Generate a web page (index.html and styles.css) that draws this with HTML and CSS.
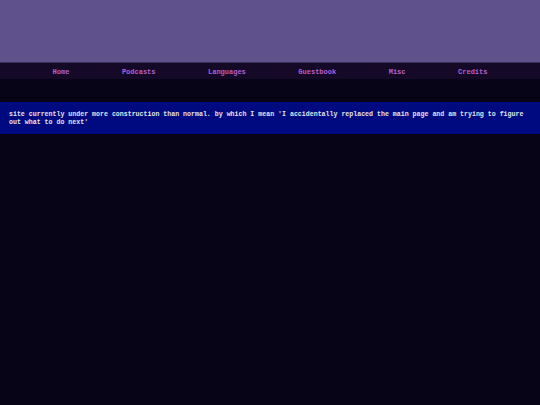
FILE: index.html
```html
<!DOCTYPE html>
<html>
<head>
<meta charset="utf-8">
<link rel="stylesheet" href="styles.css">
</head>
<body>
<header class="top"></header>
<nav class="nav">
  <a href="#">Home</a>
  <a href="#">Podcasts</a>
  <a href="#">Languages</a>
  <a href="#">Guestbook</a>
  <a href="#">Misc</a>
  <a href="#">Credits</a>
</nav>
<main class="main">
  <div class="notice">site currently under more construction than normal. by which I mean 'I accidentally replaced the main page and am trying to figure out what to do next'</div>
</main>
</body>
</html>
```
FILE: styles.css
```css
html, body {
  margin: 0;
  padding: 0;
  background: #080418;
  height: 100%;
}
body {
  font-family: "Liberation Mono", "DejaVu Sans Mono", monospace;
  font-weight: bold;
}
.top {
  height: 63px;
  background: #5f518b;
  border-bottom: 1px solid #3a2f5a;
  box-sizing: border-box;
}
.nav {
  height: 16px;
  background: #140a28;
  display: flex;
  justify-content: space-evenly;
  align-items: center;
}
.nav a {
  color: #b95ecf;
  text-decoration: none;
  font-size: 7px;
  line-height: 8px;
  padding-top: 1px;
}
.main {
  padding-top: 23px;
}
.notice {
  background: #000a80;
  color: #e4e4ee;
  font-size: 6.6px;
  line-height: 8px;
  padding: 9px 9px 7px;
}
```
